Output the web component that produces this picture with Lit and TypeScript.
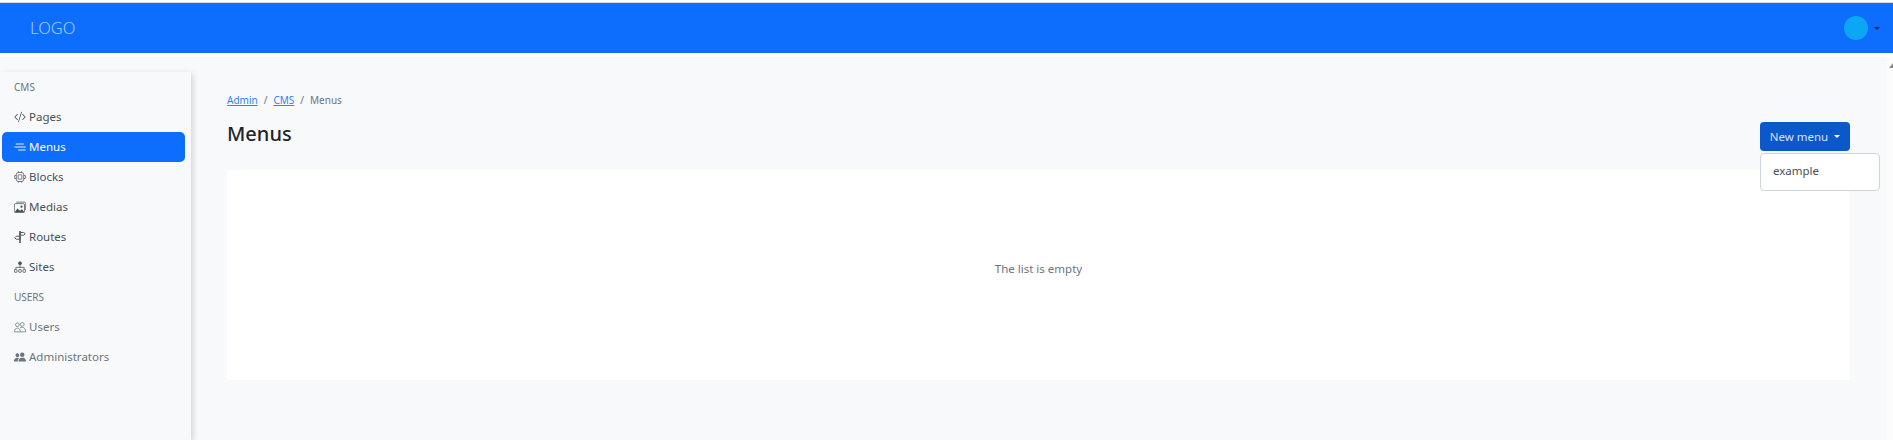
import { LitElement, html, css, svg } from "lit";
import { customElement } from "lit/decorators.js";

const icons: Record<string, unknown> = {
  code: svg`<path fill="currentColor" d="M10.478 1.647a.5.5 0 1 0-.956-.294l-4 13a.5.5 0 0 0 .956.294l4-13zM4.854 4.146a.5.5 0 0 1 0 .708L1.707 8l3.147 3.146a.5.5 0 0 1-.708.708l-3.5-3.5a.5.5 0 0 1 0-.708l3.5-3.5a.5.5 0 0 1 .708 0zm6.292 0a.5.5 0 0 0 0 .708L14.293 8l-3.147 3.146a.5.5 0 0 0 .708.708l3.5-3.5a.5.5 0 0 0 0-.708l-3.5-3.5a.5.5 0 0 0-.708 0z"/>`,
  menu: svg`<path fill="none" stroke="currentColor" stroke-width="1.200" stroke-linecap="round" d="M3 4h9.500M1 8h14M6 12h9"/>`,
  blocks: svg`<g fill="none" stroke="currentColor"><rect x="3" y="2" width="10" height="12" rx="3"/><rect x="5.500" y="5" width="5" height="6" rx="1"/><path d="M3 6H1.500a1 1 0 0 0-1 1v2a1 1 0 0 0 1 1H3M13 6h1.500a1 1 0 0 1 1 1v2a1 1 0 0 1-1 1H13M6 .5v2M10 .5v2M6 13.500v2M10 13.500v2"/></g>`,
  medias: svg`<g fill="none" stroke="currentColor"><path d="M3 1.500h11a1.500 1.500 0 0 1 1.500 1.500v9"/><rect x=".5" y="3.500" width="13.500" height="12" rx="1.500"/></g><path fill="currentColor" d="M1 15l3.500-5 3.500 3 2.500-2 3.500 4z"/><circle cx="10" cy="7.500" r="1.500" fill="currentColor"/>`,
  routes: svg`<path fill="currentColor" d="M7 0h2v16H7z"/><path fill="none" stroke="currentColor" stroke-width="1.200" d="M8 2h5l2 1.800-2 1.800H8zM8 7H3L1 9l2 2h5z"/>`,
  sites: svg`<g fill="none" stroke="currentColor"><circle cx="8" cy="3" r="2" fill="currentColor"/><path d="M8 5v4M2.500 11V8.500h11V11"/><rect x=".5" y="11.500" width="3.500" height="3.500" rx=".5"/><rect x="6.250" y="11.500" width="3.500" height="3.500" rx=".5"/><rect x="12" y="11.500" width="3.500" height="3.500" rx=".5"/></g>`,
  users: svg`<g fill="none" stroke="currentColor"><circle cx="4.500" cy="5" r="2.500"/><circle cx="11" cy="4.500" r="2.500"/><path d="M.5 14.500c0-3 1.500-5 4-5s4 2 4 5zM8 9.200c.8-.5 1.800-.7 3-.7 3 0 4.500 2.500 4.500 6H8.500"/></g>`,
  admins: svg`<path fill="currentColor" d="M7 14s-1 0-1-1 1-4 5-4 5 3 5 4-1 1-1 1H7zm4-6a3 3 0 1 0 0-6 3 3 0 0 0 0 6zm-5.784 6A2.238 2.238 0 0 1 5 13c0-1.355.68-2.750 1.936-3.720A6.325 6.325 0 0 0 5 9c-4 0-5 3-5 4s1 1 1 1h4.216zM4.500 8a2.500 2.500 0 1 0 0-5 2.500 2.500 0 0 0 0 5z"/>`,
};

const icon = (n: string) => html`<svg class="ic" viewBox="0 0 16 16">${icons[n]}</svg>`;

@customElement("app-root")
export class AppRoot extends LitElement {
  static styles = css`
    :host {
      display: block;
      height: 440px;
      overflow: hidden;
      position: relative;
      background: #f8f9fa;
      font-family: "Noto Sans", sans-serif;
      color: #212529;
      font-size: 12px;
    }
    .topline { height: 3px; box-sizing: border-box; background: #fff; border-bottom: 1px solid #d5d8db; }
    .nav {
      height: 50px;
      background: #0d6efd;
      display: flex;
      align-items: center;
      justify-content: space-between;
      padding: 0 13px 0 30px;
    }
    .logo { color: rgba(255, 255, 255, 0.65); font-size: 16.500px; font-weight: 300; padding-bottom: 2px; }
    .user { display: flex; align-items: center; gap: 6px; }
    .avatar { width: 24px; height: 24px; border-radius: 50%; background: #0da6f5; }
    .caret { border-top: 3px solid #1d2b4a; border-left: 3px solid transparent; border-right: 3px solid transparent; }
    .gap { height: 4px; background: #fff; }
    .body { display: flex; height: 383px; }
    .side {
      width: 191px;
      margin-top: 15px;
      flex: none;
      background: #f8f9fa;
      box-shadow: 2px 2px 6px rgba(0, 0, 0, 0.15);
    }
    .label { height: 30px; display: flex; align-items: center; padding-left: 14px; font-size: 10px; color: #6c757d; }
    .item {
      height: 30px; display: flex; align-items: center; gap: 3px; padding-left: 12px; margin-left: 2px;
      width: 183px; box-sizing: border-box; color: #495057; border-radius: 5px; font-size: 11.500px;
    }
    .item span { position: relative; top: -1px; }
    .item.muted { color: #6c757d; }
    .item.active { background: #0d6efd; color: #fff; }
    .ic { width: 12px; height: 12px; flex: none; display: block; }
    .main { flex: 1; padding: 34px 43px 0 36px; min-width: 0; }
    .crumb { font-size: 10px; color: #6c757d; display: flex; gap: 6px; height: 18px; align-items: center; }
    .crumb a { color: #2f82fd; text-decoration: underline; }
    .head { display: flex; justify-content: space-between; align-items: center; margin-top: 13px; height: 29px; position: relative; }
    h1 { margin: 0 0 6px; font-size: 20px; font-weight: 500; color: #212529; }
    .btn {
      width: 90px; height: 29px; box-sizing: border-box; background: #0a58ca; color: rgba(255, 255, 255, 0.85); border-radius: 4px;
      display: flex; align-items: center; justify-content: center; gap: 6px; font-size: 11.500px; padding-bottom: 1px;
    }
    .btn i { border-top: 3px solid #fff; border-left: 3px solid transparent; border-right: 3px solid transparent; }
    .menu {
      position: absolute; top: 31px; right: -30px; width: 120px; height: 38px; box-sizing: border-box;
      background: #fff; border: 1px solid #ced4da; border-radius: 4px; display: flex; align-items: center;
      padding: 0 0 3px 12px; font-size: 11.500px; color: #495057; z-index: 2;
    }
    .card { margin-top: 19px; height: 210px; box-sizing: border-box; padding-bottom: 14px; background: #fff; display: flex; align-items: center; justify-content: center; font-size: 11.500px; color: #6c757d; }
    .scroll { position: absolute; right: 0; top: 57px; bottom: 0; width: 7px; background: #fcfcfc; }
    .scroll i { display: block; margin: 6px 0 0 3px; width: 0; border-bottom: 5px solid #888; border-left: 4px solid transparent; }
  `;

  render() {
    const item = (ic: string, t: string, cls = "") =>
      html`<div class="item ${cls}">${icon(ic)}<span>${t}</span></div>`;
    return html`
      <div class="topline"></div>
      <div class="nav">
        <div class="logo">LOGO</div>
        <div class="user"><div class="avatar"></div><div class="caret"></div></div>
      </div>
      <div class="gap"></div>
      <div class="body">
        <aside class="side">
          <div class="label">CMS</div>
          ${item("code", "Pages")}
          ${item("menu", "Menus", "active")}
          ${item("blocks", "Blocks")}
          ${item("medias", "Medias")}
          ${item("routes", "Routes")}
          ${item("sites", "Sites")}
          <div class="label">USERS</div>
          ${item("users", "Users", "muted")}
          ${item("admins", "Administrators", "muted")}
        </aside>
        <main class="main">
          <div class="crumb"><a>Admin</a><span>/</span><a>CMS</a><span>/</span><span>Menus</span></div>
          <div class="head">
            <h1>Menus</h1>
            <div class="btn">New menu <i></i></div>
            <div class="menu">example</div>
          </div>
          <div class="card">The list is empty</div>
        </main>
      </div>
      <div class="scroll"><i></i></div>
    `;
  }
}
